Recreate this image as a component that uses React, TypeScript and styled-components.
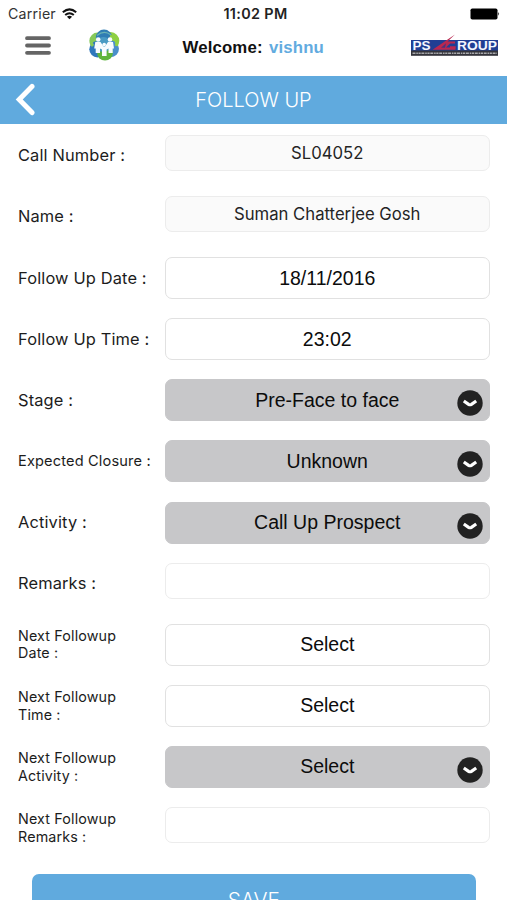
import React from "react";
import styled, { createGlobalStyle } from "styled-components";

const Global = createGlobalStyle`
  *{box-sizing:border-box}
  html,body{margin:0;background:#fff;overflow:hidden}
  body{font-family:Inter,"Liberation Sans",sans-serif;color:#1c1c1c}
`;
const Screen = styled.main`
  width:507px;height:900px;overflow:hidden;background:#fff;display:flex;flex-direction:column;
`;
const StatusBar = styled.div`
  flex:none;height:27px;padding:0 7px 0 8px;display:grid;grid-template-columns:1fr auto 1fr;align-items:center;
`;
const Carrier = styled.div`
  display:flex;align-items:center;gap:6px;font-size:14.2px;letter-spacing:.2px;color:#333;
`;
const Clock = styled.div`font-size:14.4px;font-weight:600;letter-spacing:.35px;color:#222;padding-left:3px;`;
const Battery = styled.svg`justify-self:end;display:block;`;
const Header = styled.header`
  flex:none;height:48.6px;display:grid;grid-template-columns:88px 94.5px 1fr 97px;align-items:start;
`;
const MenuButton = styled.button`
  border:0;background:none;padding:9px 0 0 25px;display:block;line-height:0;justify-self:start;
`;
const LogoWrap = styled.div`padding-top:1px;line-height:0;`;
const Welcome = styled.div`
  padding-top:11px;font:700 16.8px/20px "Liberation Sans",Arial,sans-serif;color:#111;
  white-space:nowrap;letter-spacing:.15px;
`;
const UserName = styled.span`color:#62abdf;margin-left:1.5px;`;
const Brand = styled.div`line-height:0;padding-top:7px;`;
const TitleBar = styled.div`
  flex:none;height:48.5px;background:#60aade;color:#fff;display:grid;grid-template-columns:50px 1fr 50px;align-items:center;
`;
const BackButton = styled.button`
  border:0;background:none;padding:0 0 0 15px;line-height:0;display:block;justify-self:start;
`;
const Title = styled.h1`
  margin:0;text-align:center;font-weight:350;font-size:20px;line-height:24px;padding-top:1px;
`;
const Form = styled.form`flex:none;padding:10.9px 17px 0 18px;`;
const Row = styled.div`height:61.1px;display:grid;grid-template-columns:146.5px 1fr;align-items:start;`;
const Label = styled.label<{ $size: "large" | "medium" | "small" }>`
  height:${p => (p.$size === "small" ? 41.5 : 42.2)}px;display:flex;align-items:center;white-space:pre-line;
  font-size:${p => (p.$size === "large" ? 16.4 : p.$size === "medium" ? 14.6 : 14.3)}px;
  line-height:17.5px;letter-spacing:.15px;
`;
type Kind = "readonly" | "picker" | "select" | "text";
const Field = styled.div<{ $kind: Kind }>`
  position:relative;height:${p => (p.$kind === "readonly" || p.$kind === "text" ? 36 : 42)}px;
  border:1px solid ${p => (p.$kind === "select" ? "#c7c7c9" : p.$kind === "picker" ? "#e1e1e1" : "#ececec")};
  border-radius:7px;
  background:${p => (p.$kind === "select" ? "#c7c7c9" : p.$kind === "readonly" ? "#fafafa" : "#fff")};
  display:flex;align-items:center;justify-content:center;white-space:nowrap;
  font-family:${p => (p.$kind === "readonly" ? 'Inter,sans-serif' : '"Liberation Sans",Arial,sans-serif')};
  font-size:${p => (p.$kind === "readonly" ? 16.7 : 19.5)}px;
  color:${p => (p.$kind === "readonly" ? "#242424" : "#0c0c0c")};
`;
const Chevron = styled.svg`position:absolute;right:6px;top:10px;`;
const SaveButton = styled.button`
  flex:none;margin:6px 31px 0 31.5px;height:50px;border:0;border-radius:7px;background:#60aade;color:#fff;
  padding:3px 0 0;font:350 20.8px/24px Inter,sans-serif;
`;

const rows: { label: string; size: "large" | "medium" | "small"; value: string; kind: Kind }[] = [
  { label: "Call Number :", size: "large", value: "SL04052", kind: "readonly" },
  { label: "Name :", size: "large", value: "Suman Chatterjee Gosh", kind: "readonly" },
  { label: "Follow Up Date :", size: "large", value: "18/11/2016", kind: "picker" },
  { label: "Follow Up Time :", size: "large", value: "23:02", kind: "picker" },
  { label: "Stage :", size: "large", value: "Pre-Face to face", kind: "select" },
  { label: "Expected Closure :", size: "medium", value: "Unknown", kind: "select" },
  { label: "Activity :", size: "large", value: "Call Up Prospect", kind: "select" },
  { label: "Remarks :", size: "large", value: "", kind: "text" },
  { label: "Next Followup\nDate :", size: "small", value: "Select", kind: "picker" },
  { label: "Next Followup\nTime :", size: "small", value: "Select", kind: "picker" },
  { label: "Next Followup\nActivity :", size: "small", value: "Select", kind: "select" },
  { label: "Next Followup\nRemarks :", size: "small", value: "", kind: "text" },
];

const WifiIcon = () => (
  <svg width="15" height="12" viewBox="0 0 15 12" fill="none" stroke="#111" strokeWidth="2">
    <path d="M.8 4.2Q7.5-1.5 14.2 4.2M3.2 7Q7.5 3.4 11.8 7" />
    <path d="M7.5 11.3 4.9 8.7Q7.5 6.9 10.1 8.7Z" fill="#111" stroke="none" />
  </svg>
);

const PeopleLogo = () => (
  <svg width="32" height="34" viewBox="0 0 32 34">
    <circle cx="9.6" cy="12.8" r="8.2" fill="#86c95a" />
    <circle cx="22.6" cy="12.8" r="8.7" fill="#8fd043" />
    <circle cx="9.5" cy="21.2" r="8.2" fill="#2f78bd" />
    <circle cx="22.6" cy="20.8" r="8.4" fill="#4a8fcb" />
    <circle cx="17" cy="24.5" r="8" fill="#5fb53e" />
    <circle cx="16" cy="9.8" r="8.2" fill="#2f7db4" />
    <circle cx="15.5" cy="16.5" r="7.5" fill="#4a9bc4" />
    <path d="M22 8Q30 10 28.5 18" fill="none" stroke="#8fd043" strokeWidth="3" />
    <path d="M4 10Q2 15 5 18" fill="none" stroke="#86c95a" strokeWidth="3" />
    <path d="M9 7.5Q16 1.5 23 7" fill="none" stroke="#69b3b4" strokeWidth="1.2" />
    <g fill="#f8fcff">
      <circle cx="10.2" cy="11.5" r="2.3" />
      <circle cx="22" cy="11.5" r="2.3" />
      <circle cx="16.2" cy="16.5" r="1.8" />
      <path d="M7.3 14H12.5L15.5 18.5H17L20 14H25L26 20.5H24.7V25H20.5V20.5L18.6 21.5V28H14V21.5L12 20.5V25H7.7V20.5H6.2Z" />
    </g>
  </svg>
);

const PsGroupLogo = () => (
  <svg width="89" height="23" viewBox="0 0 89 23">
    <rect x="1" y="6" width="87" height="11" fill="#203e94" />
    <rect x="1" y="16.5" width="87" height="5.3" fill="#34343b" />
    <g fill="#f3f6ff" fontFamily="Liberation Sans" fontWeight="700" fontSize="12.3">
      <text x="2.5" y="15.8" textLength="18" lengthAdjust="spacingAndGlyphs">PS</text>
      <text x="47" y="15.8" textLength="40" lengthAdjust="spacingAndGlyphs">ROUP</text>
    </g>
    <path d="M45 .5 22.5 15.7H45.5L45.8 12.3H40V13.6H36L40 9.5H45V7.5H37.5Z" fill="#b92850" />
    <path d="M31 13.8 36 9.2 35 13.8Z" fill="#4a337e" />
    <path d="M2.5 19.2H87" stroke="#a9a9ac" strokeWidth="1.4" strokeDasharray="3 .8 1.6 .6 2.2 .7" />
  </svg>
);

export default function App() {
  return (
    <Screen>
      <Global />
      <StatusBar>
        <Carrier><span>Carrier</span><WifiIcon /></Carrier>
        <Clock>11:02 PM</Clock>
        <Battery width="30" height="12" viewBox="0 0 30 12">
          <rect x=".5" y=".5" width="27" height="11" rx="1.8" fill="#000" />
          <path d="M28.2 4Q30 5.8 28.2 7.7Z" fill="#111" />
        </Battery>
      </StatusBar>
      <Header>
        <MenuButton type="button" aria-label="Menu">
          <svg width="26" height="20" viewBox="0 0 26 20" fill="none" stroke="#656565" strokeWidth="3.8" strokeLinecap="round">
            <path d="M2 2.2H24M2 9.5H24M2 16.8H24" />
          </svg>
        </MenuButton>
        <LogoWrap><PeopleLogo /></LogoWrap>
        <Welcome>Welcome: <UserName>vishnu</UserName></Welcome>
        <Brand><PsGroupLogo /></Brand>
      </Header>
      <TitleBar>
        <BackButton type="button" aria-label="Back">
          <svg width="21" height="33" viewBox="0 0 21 33" fill="none" stroke="#fff" strokeWidth="5" strokeLinecap="round" strokeLinejoin="miter">
            <path d="M17 3.4 4.2 16.5 17 29.6" />
          </svg>
        </BackButton>
        <Title>FOLLOW UP</Title>
      </TitleBar>
      <Form>
        {rows.map(row => (
          <Row key={row.label}>
            <Label $size={row.size}>{row.label}</Label>
            <Field $kind={row.kind}>
              {row.value}
              {row.kind === "select" && (
                <Chevron width="26" height="26" viewBox="0 0 26 26">
                  <circle cx="13" cy="13" r="12.7" fill="#222" />
                  <path d="M6.8 11 11.6 14.3Q13 15.2 14.4 14.3L19.2 11" fill="none" stroke="#fff" strokeWidth="3.2" />
                </Chevron>
              )}
            </Field>
          </Row>
        ))}
      </Form>
      <SaveButton type="button">SAVE</SaveButton>
    </Screen>
  );
}
